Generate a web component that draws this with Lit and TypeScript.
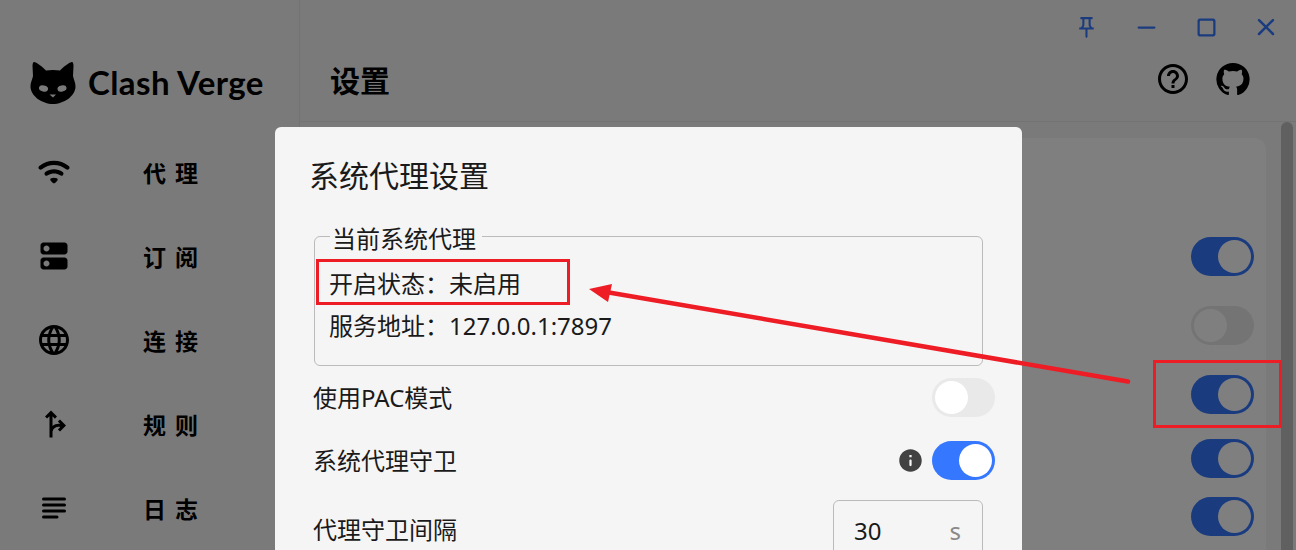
import { LitElement, html, css, svg } from "lit";
import { customElement } from "lit/decorators.js";

const P = {
  wifi: "M2.06 10.06c.51.51 1.32.56 1.87.1 4.67-3.84 11.45-3.84 16.13-.01.56.46 1.38.42 1.89-.09.59-.59.55-1.57-.1-2.1-5.71-4.67-13.97-4.67-19.69 0-.65.52-.7 1.5-.1 2.1zm7.76 7.76 1.47 1.47c.39.39 1.02.39 1.41 0l1.47-1.47c.47-.47.37-1.28-.23-1.59-1.22-.63-2.68-.63-3.91 0-.57.31-.68 1.12-.21 1.59zm-3.73-3.73c.49.49 1.26.54 1.83.13 2.44-1.73 5.72-1.73 8.16 0 .57.4 1.34.36 1.83-.13l.01-.01c.6-.6.56-1.62-.13-2.11-3.44-2.49-8.13-2.49-11.58 0-.69.5-.73 1.51-.12 2.12z",
  dns: "M19 13H5c-1.1 0-2 .9-2 2v4c0 1.1.9 2 2 2h14c1.1 0 2-.9 2-2v-4c0-1.1-.9-2-2-2zM7 19c-1.1 0-2-.9-2-2s.9-2 2-2 2 .9 2 2-.9 2-2 2zM19 3H5c-1.1 0-2 .9-2 2v4c0 1.1.9 2 2 2h14c1.1 0 2-.9 2-2V5c0-1.1-.9-2-2-2zM7 9c-1.1 0-2-.9-2-2s.9-2 2-2 2 .9 2 2-.9 2-2 2z",
  lang: "M11.99 2C6.47 2 2 6.48 2 12s4.47 10 9.99 10C17.52 22 22 17.52 22 12S17.52 2 11.99 2zm6.93 6h-2.95c-.32-1.25-.78-2.45-1.38-3.56 1.84.63 3.37 1.91 4.33 3.56zM12 4.04c.83 1.2 1.48 2.53 1.91 3.96h-3.82c.43-1.43 1.08-2.76 1.91-3.96zM4.26 14C4.1 13.36 4 12.69 4 12s.1-1.36.26-2h3.38c-.08.66-.14 1.32-.14 2s.06 1.34.14 2H4.26zm.82 2h2.95c.32 1.25.78 2.45 1.38 3.56-1.84-.63-3.37-1.9-4.33-3.56zm2.95-8H5.08c.96-1.66 2.49-2.93 4.33-3.56C8.81 5.55 8.35 6.75 8.03 8zM12 19.96c-.83-1.2-1.48-2.53-1.91-3.96h3.82c-.43 1.43-1.08 2.76-1.91 3.96zM14.34 14H9.66c-.09-.66-.16-1.32-.16-2s.07-1.35.16-2h4.68c.09.65.16 1.32.16 2s-.07 1.34-.16 2zm.25 5.56c.6-1.11 1.06-2.31 1.38-3.56h2.95c-.96 1.65-2.49 2.93-4.33 3.56zM16.36 14c.08-.66.14-1.32.14-2s-.06-1.34-.14-2h3.38c.16.64.26 1.31.26 2s-.1 1.36-.26 2h-3.38z",
  fork: "M14.59 15.59 16 17l4-4-4-4-1.41 1.41L16.17 12c-1.51-.33-3.73.08-5.17 1.36V6.83l1.59 1.59L14 7l-4-4-4 4 1.41 1.41L9 6.83V21h2v-4c.73-2.58 3.07-3.47 5.17-3l-1.58 1.59z",
  subject: "M5 5h14a1 1 0 0 1 0 2H5a1 1 0 0 1 0-2zM5 9h14a1 1 0 0 1 0 2H5a1 1 0 0 1 0-2zM5 13h14a1 1 0 0 1 0 2H5a1 1 0 0 1 0-2zM5 17h9a1 1 0 0 1 0 2H5a1 1 0 0 1 0-2z",
  help: "M11 18h2v-2h-2v2zm1-16C6.48 2 2 6.48 2 12s4.48 10 10 10 10-4.48 10-10S17.52 2 12 2zm0 18c-4.41 0-8-3.59-8-8s3.59-8 8-8 8 3.59 8 8-3.59 8-8 8zm0-14c-2.21 0-4 1.79-4 4h2c0-1.1.9-2 2-2s2 .9 2 2c0 2-3 1.75-3 5h2c0-2.25 3-2.5 3-5 0-2.21-1.79-4-4-4z",
  github: "M12 1.27a11 11 0 00-3.48 21.46c.55.09.73-.28.73-.55v-1.84c-3.03.64-3.67-1.46-3.67-1.46-.55-1.29-1.28-1.65-1.28-1.65-.92-.65.1-.65.1-.65 1.1 0 1.73 1.1 1.73 1.1.92 1.65 2.57 1.2 3.21.92a2 2 0 01.64-1.47c-2.47-.27-5.04-1.19-5.04-5.5 0-1.1.46-2.1 1.2-2.84a3.76 3.76 0 010-2.93s.91-.28 3.11 1.1c1.8-.49 3.7-.49 5.5 0 2.1-1.38 3.02-1.1 3.02-1.1a3.76 3.76 0 010 2.93c.83.74 1.2 1.74 1.2 2.94 0 4.21-2.57 5.13-5.04 5.4.45.37.82.92.82 2.02v3.03c0 .27.1.64.73.55A11 11 0 0012 1.27",
  info: "M12 2C6.48 2 2 6.48 2 12s4.48 10 10 10 10-4.48 10-10S17.52 2 12 2zm0 15c-.55 0-1-.45-1-1v-4c0-.55.45-1 1-1s1 .45 1 1v4c0 .55-.45 1-1 1zm1-8h-2V7h2v2z",
  pin: "M14 4v5c0 1.12.37 2.16 1 3H9c.65-.86 1-1.9 1-3V4h4m3-2H7c-.55 0-1 .45-1 1s.45 1 1 1h1v5c0 1.66-1.34 3-3 3v2h5.97v7l1 1 1-1v-7H19v-2c-1.66 0-3-1.34-3-3V4h1c.55 0 1-.45 1-1s-.45-1-1-1z",
  min: "M5 11h14a1 1 0 0 1 0 2H5a1 1 0 0 1 0-2z",
  max: "M18 4H6c-1.1 0-2 .9-2 2v12c0 1.1.9 2 2 2h12c1.1 0 2-.9 2-2V6c0-1.1-.9-2-2-2zm0 13c0 .55-.45 1-1 1H7c-.55 0-1-.45-1-1V7c0-.55.45-1 1-1h10c.55 0 1 .45 1 1v10z",
  close: "M18.3 5.71a.996.996 0 0 0-1.41 0L12 10.59 7.11 5.7A.996.996 0 1 0 5.7 7.11L10.59 12 5.7 16.89a.996.996 0 1 0 1.41 1.41L12 13.41l4.89 4.89a.996.996 0 1 0 1.41-1.41L13.41 12l4.89-4.89c.38-.38.38-1.02 0-1.4z",
};

const icon = (d: string, size: number, cls = "") => html`<svg class="icon ${cls}" viewBox="0 0 24 24" width=${size} height=${size}><path d=${d}></path></svg>`;

const NAV = [
  { icon: P.wifi, label: "代理" },
  { icon: P.dns, label: "订阅" },
  { icon: P.lang, label: "连接" },
  { icon: P.fork, label: "规则" },
  { icon: P.subject, label: "日志" },
];

@customElement("app-root")
export class AppRoot extends LitElement {
  static styles = css`
    :host { display: block; position: relative; width: 1296px; height: 550px; overflow: hidden; background: #f5f5f5;
      font-family: "Noto Sans", "Noto Sans CJK SC", sans-serif; color: #000; }
    * { box-sizing: border-box; }
    .icon { display: block; fill: currentColor; flex: none; }
    .app { display: flex; height: 100%; }
    .side { width: 300px; flex: none; border-right: 1px solid #e6e6e6; padding-top: 61px; }
    .brand { display: flex; align-items: center; gap: 12px; padding-left: 30px; height: 44px; }
    .brand-name { font-family: "Lato", sans-serif; font-weight: 700; font-size: 33px; letter-spacing: 0.4px; line-height: 40px; color: #000; margin-top: -3px; }
    .nav { margin-top: 25px; display: flex; flex-direction: column; }
    .nav-item { height: 84px; display: flex; align-items: center; padding-left: 36px; }
    .nav-label { margin-left: 71px; font-family: "Noto Sans CJK SC", sans-serif; font-weight: 700; font-size: 23px; letter-spacing: 9px; line-height: 1; }
    .main { flex: 1; min-width: 0; display: flex; flex-direction: column; }
    .winbar { height: 54px; flex: none; display: flex; justify-content: flex-end; color: #3578ff; }
    .winbtn { width: 60px; display: flex; align-items: center; justify-content: center; }
    .header { height: 68px; flex: none; display: flex; align-items: center; justify-content: space-between; padding: 0 45px 18px 30px; border-bottom: 1px solid #e6e6e6; }
    .page-title { font-family: "Noto Sans CJK SC", sans-serif; font-weight: 700; font-size: 30px; line-height: 1; }
    .tools { display: flex; align-items: center; gap: 24px; }
    .content { flex: 1; min-height: 0; display: flex; justify-content: flex-end; }
    .card { flex: 1; margin: 16px 15px 0 20px; background: #fff; border-radius: 12px 12px 0 0; padding: 99px 12px 0 0; display: flex; flex-direction: column; align-items: flex-end; }
    .scroll { width: 12px; margin-right: 3px; background: #c0c0c0; border-radius: 6px 6px 0 0; }
    .card .toggle { margin-bottom: 30px; }
    .card .toggle.g1 { margin-bottom: 25px; }
    .card .toggle.g2 { margin-bottom: 19px; }
    .toggle { width: 63px; height: 39px; border-radius: 20px; padding: 3px; flex: none; background: #e9e9e9; display: flex; }
    .toggle.on { background: #3578ff; justify-content: flex-end; }
    .thumb { width: 33px; height: 33px; border-radius: 50%; background: #fff; }
    .scrim { position: absolute; inset: 0; background: rgba(0, 0, 0, 0.5); }
    .dialog { position: absolute; left: 275px; top: 127px; width: 747px; height: 460px; background: #f5f5f5; border-radius: 6px; padding: 25px 27px 0 39px; color: #1a1a1a; }
    .dialog-title { font-size: 30px; line-height: 48px; margin-left: -5px; }
    .sys { margin: 21px 12px 0 0; height: 145px; padding: 0 14px; border: 1px solid #bbb; border-radius: 6px; min-width: 0; }
    .sys legend { margin-left: 1px; padding: 6px 6px 0 2px; font-size: 24px; line-height: 24px; }
    .sys-line { font-size: 24px; line-height: 42px; }
    .sys-line:first-of-type { margin-top: 12px; }
    .row { display: flex; align-items: center; justify-content: space-between; font-size: 24px; }
    .row.a { height: 39px; margin-top: 12px; }
    .row.b { height: 39px; margin-top: 24px; }
    .row.c { margin-top: 20px; align-items: flex-start; padding-right: 12px; }
    .row-label { line-height: 39px; margin-left: -1px; }
    .row.c .row-label { line-height: 60px; }
    .right { display: flex; align-items: center; gap: 8px; }
    .info { color: #424242; }
    .field { width: 150px; height: 60px; border: 1px solid #bbb; border-radius: 6px; display: flex; align-items: center; justify-content: space-between; padding: 0 21px 0 20px; font-size: 24px; }
    .suffix { color: #8a8a8a; }
    .marks { position: absolute; left: 0; top: 0; pointer-events: none; }
  `;

  render() {
    return html`
      <div class="app">
        <aside class="side">
          <div class="brand">
            <svg class="icon" viewBox="30 61 46 44" width="46" height="44">
              <path fill-rule="evenodd" d="M34 62C36 62 43 67 46 70.5C50 69.8 56 69.8 60 70.5C63 67 70 62 72 62C73 62 73.5 64 73.5 66L73 76C73.5 79 75.8 83 75.5 87C75 96 64 104 53 104C42 104 31 96 30.5 87C30.2 83 32.5 79 33 76L32.5 66C32.5 64 33 62 34 62Z"></path>
              ${svg`<ellipse cx="43.5" cy="88.5" rx="4.6" ry="3" transform="rotate(12 43.5 88.5)" fill="#f5f5f5"></ellipse>
              <ellipse cx="62" cy="88.5" rx="4.6" ry="3" transform="rotate(-12 62 88.5)" fill="#f5f5f5"></ellipse>
              <path d="M49.5 94.5L56 94.5L53 97.5Z" fill="#f5f5f5"></path>`}
            </svg>
            <span class="brand-name">Clash Verge</span>
          </div>
          <nav class="nav">
            ${NAV.map((n) => html`<div class="nav-item">${icon(n.icon, 36)}<span class="nav-label">${n.label}</span></div>`)}
          </nav>
        </aside>
        <div class="main">
          <div class="winbar">
            <div class="winbtn">${icon(P.pin, 25)}</div>
            <div class="winbtn">${icon(P.min, 27)}</div>
            <div class="winbtn">${icon(P.max, 27)}</div>
            <div class="winbtn">${icon(P.close, 30)}</div>
          </div>
          <header class="header">
            <div class="page-title">设置</div>
            <div class="tools">
              ${icon(P.help, 36)}
              ${icon(P.github, 36)}
            </div>
          </header>
          <div class="content">
            <div class="card">
              <div class="toggle on"><div class="thumb"></div></div>
              <div class="toggle"><div class="thumb"></div></div>
              <div class="toggle on g1"><div class="thumb"></div></div>
              <div class="toggle on g2"><div class="thumb"></div></div>
              <div class="toggle on"><div class="thumb"></div></div>
            </div>
            <div class="scroll"></div>
          </div>
        </div>
      </div>
      <div class="scrim"></div>
      <section class="dialog">
        <div class="dialog-title">系统代理设置</div>
        <fieldset class="sys">
          <legend>当前系统代理</legend>
          <div class="sys-line">开启状态：未启用</div>
          <div class="sys-line">服务地址：127.0.0.1:7897</div>
        </fieldset>
        <div class="row a">
          <span class="row-label">使用PAC模式</span>
          <div class="toggle"><div class="thumb"></div></div>
        </div>
        <div class="row b">
          <span class="row-label">系统代理守卫</span>
          <div class="right">
            ${icon(P.info, 27, "info")}
            <div class="toggle on"><div class="thumb"></div></div>
          </div>
        </div>
        <div class="row c">
          <span class="row-label">代理守卫间隔</span>
          <div class="field"><span>30</span><span class="suffix">s</span></div>
        </div>
      </section>
      <svg class="marks" width="1296" height="550" viewBox="0 0 1296 550">
        <rect x="317.5" y="260.5" width="251" height="43" fill="none" stroke="#ee1c25" stroke-width="3"></rect>
        <rect x="1154.5" y="361.5" width="126" height="65" fill="none" stroke="#ee1c25" stroke-width="3"></rect>
        <line x1="1128" y1="381.5" x2="606" y2="292" stroke="#ee1c25" stroke-width="4.5" stroke-linecap="round"></line>
        <path d="M589 289L612 284L608 302Z" fill="#ee1c25"></path>
      </svg>
    `;
  }
}
